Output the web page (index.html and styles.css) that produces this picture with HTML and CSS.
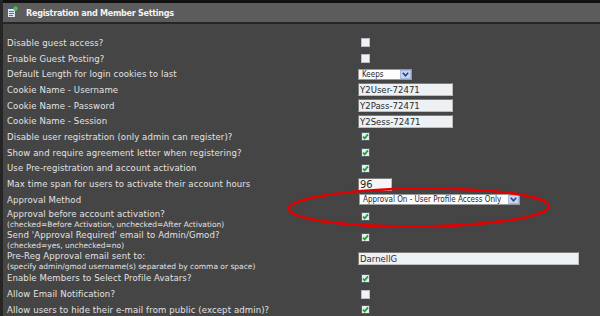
FILE: index.html
```html
<!DOCTYPE html>
<html lang="en">
<head>
<meta charset="UTF-8">
<title>Registration and Member Settings</title>
<link rel="stylesheet" href="styles.css">
</head>
<body>

<div class="panel">
    <div class="topline"></div>
    <div class="head">
        <svg class="head-icon" width="11" height="12" viewBox="0 0 11 12">
            <rect x="0.5" y="2.5" width="8" height="9" fill="#dfe6f2" stroke="#4d5f86"/>
            <rect x="2" y="5" width="5" height="1" fill="#4d6fb8"/>
            <rect x="2" y="7" width="5" height="1" fill="#4d6fb8"/>
            <rect x="2" y="9" width="4" height="1" fill="#4d6fb8"/>
            <circle cx="8.5" cy="2.5" r="2.3" fill="#3fc43a"/>
        </svg>
        <span>Registration and Member Settings</span>
    </div>

    <div class="rows">
        <div class="row"><div class="lbl">Disable guest access?</div><div class="ctl"><span class="cb"></span></div></div>
        <div class="row"><div class="lbl">Enable Guest Posting?</div><div class="ctl"><span class="cb"></span></div></div>
        <div class="row"><div class="lbl">Default Length for login cookies to last</div>
            <div class="ctl"><div class="sel sel-keeps"><span class="sel-text">Keeps</span><span class="sel-btn"><svg width="7" height="5" viewBox="0 0 7 5"><path d="M0.8 0.8 L3.5 3.8 L6.2 0.8" fill="none" stroke="#25428f" stroke-width="1.6"/></svg></span></div></div></div>
        <div class="row"><div class="lbl">Cookie Name - Username</div><div class="ctl"><input class="txt txt-mid" type="text" value="Y2User-72471"></div></div>
        <div class="row"><div class="lbl">Cookie Name - Password</div><div class="ctl"><input class="txt txt-mid" type="text" value="Y2Pass-72471"></div></div>
        <div class="row"><div class="lbl">Cookie Name - Session</div><div class="ctl"><input class="txt txt-mid" type="text" value="Y2Sess-72471"></div></div>
        <div class="row"><div class="lbl">Disable user registration (only admin can register)?</div><div class="ctl"><span class="cb on"><svg width="9" height="9" viewBox="0 0 9 9"><path d="M2 4.6 L3.7 6.4 L7 2.4" fill="none" stroke="#23a12a" stroke-width="1.7"/></svg></span></div></div>
        <div class="row"><div class="lbl">Show and require agreement letter when registering?</div><div class="ctl"><span class="cb on"><svg width="9" height="9" viewBox="0 0 9 9"><path d="M2 4.6 L3.7 6.4 L7 2.4" fill="none" stroke="#23a12a" stroke-width="1.7"/></svg></span></div></div>
        <div class="row"><div class="lbl">Use Pre-registration and account activation</div><div class="ctl"><span class="cb on"><svg width="9" height="9" viewBox="0 0 9 9"><path d="M2 4.6 L3.7 6.4 L7 2.4" fill="none" stroke="#23a12a" stroke-width="1.7"/></svg></span></div></div>
        <div class="row"><div class="lbl">Max time span for users to activate their account hours</div><div class="ctl"><input class="txt txt-short" type="text" value="96"></div></div>
        <div class="row"><div class="lbl">Approval Method</div>
            <div class="ctl"><div class="sel sel-approval"><span class="sel-text">Approval On - User Profile Access Only</span><span class="sel-btn"><svg width="7" height="5" viewBox="0 0 7 5"><path d="M0.8 0.8 L3.5 3.8 L6.2 0.8" fill="none" stroke="#25428f" stroke-width="1.6"/></svg></span></div></div></div>
        <div class="row dbl"><div class="lbl">Approval before account activation?<small>(checked=Before Activation, unchecked=After Activation)</small></div><div class="ctl"><span class="cb on"><svg width="9" height="9" viewBox="0 0 9 9"><path d="M2 4.6 L3.7 6.4 L7 2.4" fill="none" stroke="#23a12a" stroke-width="1.7"/></svg></span></div></div>
        <div class="row dbl"><div class="lbl">Send 'Approval Required' email to Admin/Gmod?<small>(checked=yes, unchecked=no)</small></div><div class="ctl"><span class="cb on"><svg width="9" height="9" viewBox="0 0 9 9"><path d="M2 4.6 L3.7 6.4 L7 2.4" fill="none" stroke="#23a12a" stroke-width="1.7"/></svg></span></div></div>
        <div class="row dbl"><div class="lbl">Pre-Reg Approval email sent to:<small>(specify admin/gmod username(s) separated by comma or space)</small></div><div class="ctl"><input class="txt txt-long" type="text" value="DarnellG"></div></div>
        <div class="row"><div class="lbl">Enable Members to Select Profile Avatars?</div><div class="ctl"><span class="cb on"><svg width="9" height="9" viewBox="0 0 9 9"><path d="M2 4.6 L3.7 6.4 L7 2.4" fill="none" stroke="#23a12a" stroke-width="1.7"/></svg></span></div></div>
        <div class="row"><div class="lbl">Allow Email Notification?</div><div class="ctl"><span class="cb"></span></div></div>
        <div class="row"><div class="lbl">Allow users to hide their e-mail from public (except admin)?</div><div class="ctl"><span class="cb on"><svg width="9" height="9" viewBox="0 0 9 9"><path d="M2 4.6 L3.7 6.4 L7 2.4" fill="none" stroke="#23a12a" stroke-width="1.7"/></svg></span></div></div>
    </div>

    <!-- red marker drawn over the screenshot -->
    <svg class="ring" width="600" height="316" viewBox="0 0 600 316">
        <ellipse cx="419" cy="207.5" rx="130" ry="19" fill="none" stroke="#e30000" stroke-width="2.6" transform="rotate(-0.6 419 207.5)"/>
    </svg>
</div>

</body>
</html>
```

FILE: styles.css
```css
html, body {
    margin: 0;
    padding: 0;
    overflow: hidden;
}

body {
    font-family: "DejaVu Sans Condensed", "DejaVu Sans", sans-serif;
    background-color: #454545;
    color: #e2e2e2;
    width: 600px;
    height: 316px;
}

.panel {
    position: relative;
    height: 316px;
    border-left: 3px solid #262626;
    background-color: #454545;
}

.topline {
    height: 3px;
    background-color: #111;
}

.head {
    display: flex;
    align-items: center;
    height: 19px;
    padding-left: 4px;
    background-color: #5c5c5c;
    border-bottom: 2px solid #262626;
    color: #f2f2f2;
    font-weight: bold;
    font-size: 9px;
    letter-spacing: -0.3px;
}

.head-icon {
    margin-right: 8px;
    margin-top: -1px;
}

.rows {
    padding: 11px 0 0 4px;
}

.row {
    display: grid;
    grid-template-columns: 351px 1fr;
    align-items: center;
    height: 15.7px;
}

.row.dbl {
    height: 21px;
}

.lbl {
    font-size: 9.5px;
    line-height: 12px;
    letter-spacing: 0.1px;
    white-space: nowrap;
}

.lbl small {
    display: block;
    font-family: "DejaVu Sans", sans-serif;
    font-size: 7.5px;
    line-height: 9px;
    letter-spacing: 0;
}

.ctl {
    display: flex;
    align-items: center;
}

.dbl .ctl {
    padding-bottom: 4px;
}

.cb {
    display: inline-block;
    box-sizing: border-box;
    width: 9px;
    height: 9px;
    margin-left: 3px;
    background-color: #f1f2f4;
    border: 1px solid #b9bec6;
}

.cb.on {
    background-color: #e6ebf1;
    border-color: #4e5c74;
}

.cb svg {
    display: block;
    margin: -1px 0 0 -1px;
}

.txt {
    box-sizing: border-box;
    height: 13px;
    margin: 0;
    padding: 0 0 0 1px;
    border: 1px solid #7c7c7c;
    border-bottom-color: #bdbdbd;
    border-right-color: #bdbdbd;
    background-color: #eef1f3;
    color: #2a2a2a;
    font-family: "DejaVu Sans Condensed", "DejaVu Sans", sans-serif;
    font-size: 9.5px;
    outline: none;
}

.txt-mid {
    width: 95px;
}

.txt-short {
    width: 34px;
    background-color: #f6f6f6;
    font-size: 11px;
}

.txt-long {
    width: 221px;
}

.sel {
    display: inline-flex;
    align-items: center;
    box-sizing: border-box;
    height: 11px;
    background-color: #fdfdfd;
    border: 1px solid #9a9a9a;
    color: #1f1f1f;
    font-size: 8px;
}

.sel-text {
    flex: 1;
    padding-left: 3px;
    white-space: nowrap;
}

.sel-btn {
    display: flex;
    align-items: center;
    justify-content: center;
    width: 11px;
    height: 9px;
    box-sizing: border-box;
    background-color: #c8d5f0;
    border: 1px solid #a6b8de;
}

.sel-keeps {
    width: 54px;
}

.sel-approval {
    width: 161px;
    margin-left: 1px;
}

.ring {
    position: absolute;
    left: -3px;
    top: 0;
    pointer-events: none;
}
```
